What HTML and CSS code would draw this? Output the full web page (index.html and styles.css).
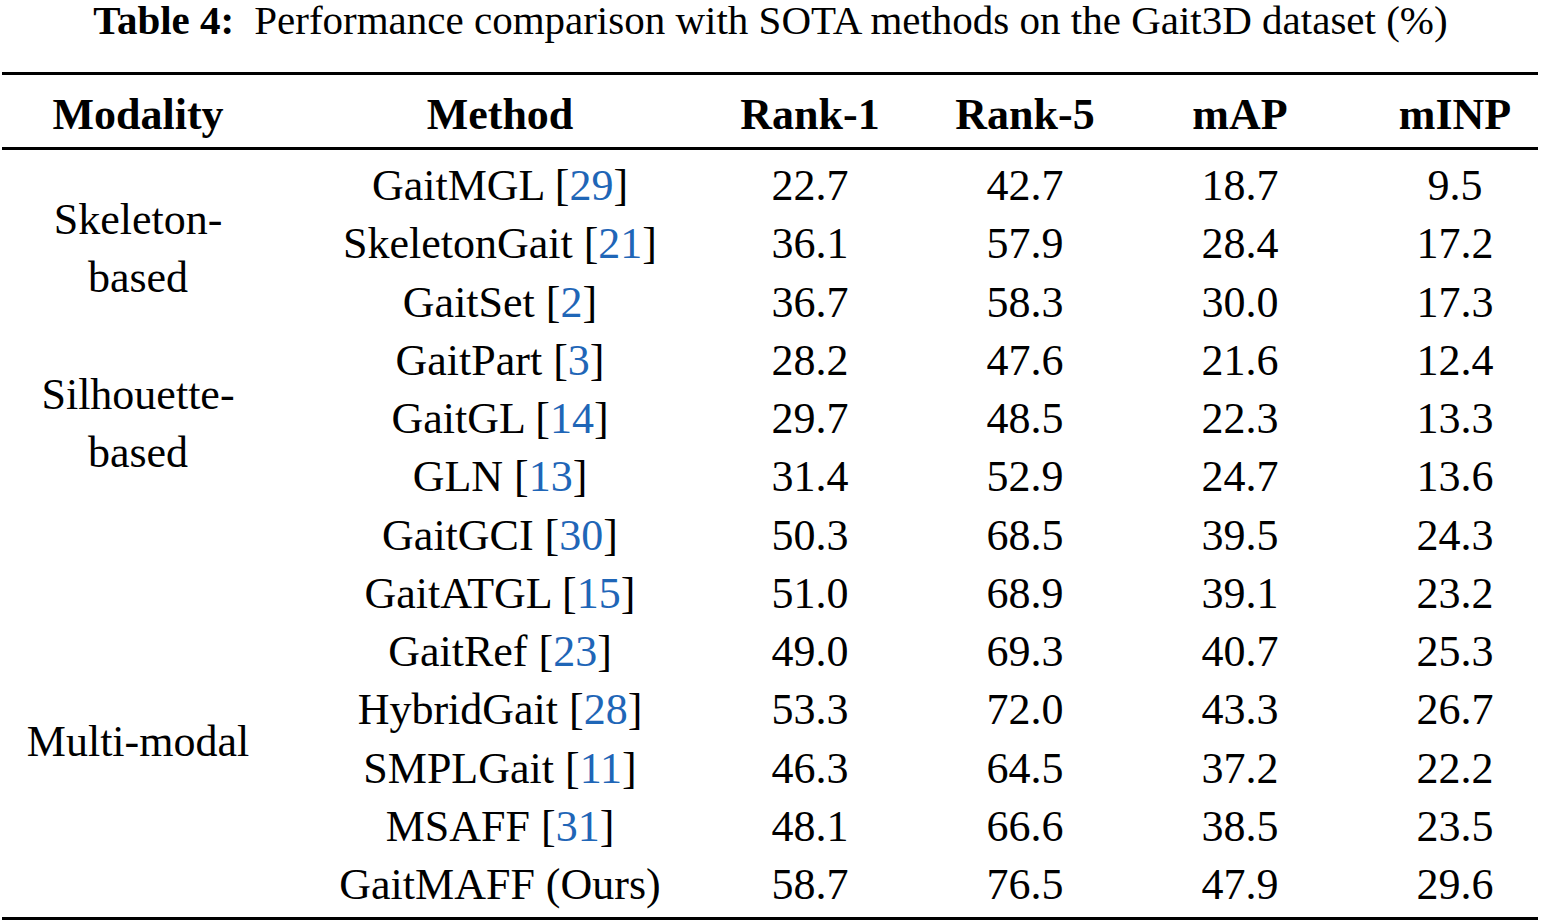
FILE: index.html
```html
<!DOCTYPE html>
<html lang="en">
<head>
<meta charset="utf-8">
<title>Table 4</title>
<link rel="stylesheet" href="styles.css">
</head>
<body>
<div class="caption"><span class="label">Table 4:</span><span class="text">Performance comparison with SOTA methods on the Gait3D dataset (%)</span></div>
<table class="results">
  <colgroup>
    <col class="w-mod">
    <col class="w-meth">
    <col class="w-r1">
    <col class="w-r5">
    <col class="w-map">
    <col class="w-minp">
  </colgroup>
  <thead>
    <tr>
      <th>Modality</th>
      <th>Method</th>
      <th>Rank-1</th>
      <th>Rank-5</th>
      <th>mAP</th>
      <th class="last">mINP</th>
    </tr>
  </thead>
  <tbody>
    <tr class="first">
      <td rowspan="3" class="mod mod-skel">Skeleton-<br>based</td>
      <td>GaitMGL [<span class="ref">29</span>]</td>
      <td>22.7</td><td>42.7</td><td>18.7</td><td class="last">9.5</td>
    </tr>
    <tr>
      <td>SkeletonGait [<span class="ref">21</span>]</td>
      <td>36.1</td><td>57.9</td><td>28.4</td><td class="last">17.2</td>
    </tr>
    <tr>
      <td>GaitSet [<span class="ref">2</span>]</td>
      <td>36.7</td><td>58.3</td><td>30.0</td><td class="last">17.3</td>
    </tr>
    <tr>
      <td rowspan="3" class="mod mod-sil">Silhouette-<br>based</td>
      <td>GaitPart [<span class="ref">3</span>]</td>
      <td>28.2</td><td>47.6</td><td>21.6</td><td class="last">12.4</td>
    </tr>
    <tr>
      <td>GaitGL [<span class="ref">14</span>]</td>
      <td>29.7</td><td>48.5</td><td>22.3</td><td class="last">13.3</td>
    </tr>
    <tr>
      <td>GLN [<span class="ref">13</span>]</td>
      <td>31.4</td><td>52.9</td><td>24.7</td><td class="last">13.6</td>
    </tr>
    <tr>
      <td rowspan="7" class="mod mod-multi">Multi-modal</td>
      <td>GaitGCI [<span class="ref">30</span>]</td>
      <td>50.3</td><td>68.5</td><td>39.5</td><td class="last">24.3</td>
    </tr>
    <tr>
      <td>GaitATGL [<span class="ref">15</span>]</td>
      <td>51.0</td><td>68.9</td><td>39.1</td><td class="last">23.2</td>
    </tr>
    <tr>
      <td>GaitRef [<span class="ref">23</span>]</td>
      <td>49.0</td><td>69.3</td><td>40.7</td><td class="last">25.3</td>
    </tr>
    <tr>
      <td>HybridGait [<span class="ref">28</span>]</td>
      <td>53.3</td><td>72.0</td><td>43.3</td><td class="last">26.7</td>
    </tr>
    <tr>
      <td>SMPLGait [<span class="ref">11</span>]</td>
      <td>46.3</td><td>64.5</td><td>37.2</td><td class="last">22.2</td>
    </tr>
    <tr>
      <td>MSAFF [<span class="ref">31</span>]</td>
      <td>48.1</td><td>66.6</td><td>38.5</td><td class="last">23.5</td>
    </tr>
    <tr class="final">
      <td>GaitMAFF (Ours)</td>
      <td>58.7</td><td>76.5</td><td>47.9</td><td class="last">29.6</td>
    </tr>
  </tbody>
</table>
</body>
</html>
```

FILE: styles.css
```css
html, body {
  margin: 0;
  padding: 0;
  background: #ffffff;
}

body {
  font-family: "Liberation Serif", "DejaVu Serif", serif;
  color: #000000;
  width: 1541px;
}

.caption {
  height: 72px;
  font-size: 41px;
  line-height: 40px;
  text-align: center;
  white-space: nowrap;
}

.caption .label {
  font-weight: bold;
  margin-right: 20px;
}

.results {
  margin-left: 2px;
  width: 1536px;
  table-layout: fixed;
  border-collapse: separate;
  border-spacing: 0;
  border-top: 3px solid #000;
  border-bottom: 3px solid #000;
  font-size: 44px;
}

.w-mod { width: 272px; }
.w-meth { width: 452px; }
.w-r1 { width: 168px; }
.w-r5 { width: 262px; }
.w-map { width: 168px; }
.w-minp { width: 214px; }

.results th,
.results td {
  padding: 0;
  text-align: center;
  white-space: nowrap;
}

.results th {
  font-weight: bold;
  line-height: 56px;
  padding-top: 12px;
  padding-bottom: 4px;
  border-bottom: 3px solid #000;
}

.results td {
  line-height: 58.25px;
  vertical-align: middle;
}

.results th.last,
.results td.last {
  padding-left: 48px;
}

.results tr.first td {
  padding-top: 7px;
}

.results tr.final td {
  padding-bottom: 2.5px;
}

.results tr td.mod-skel {
  padding-top: 17px;
}

.results tr td.mod-sil {
  padding-top: 10px;
}

.results tr td.mod-multi {
  padding-top: 61px;
}

.ref {
  color: #1f66b7;
}
```
